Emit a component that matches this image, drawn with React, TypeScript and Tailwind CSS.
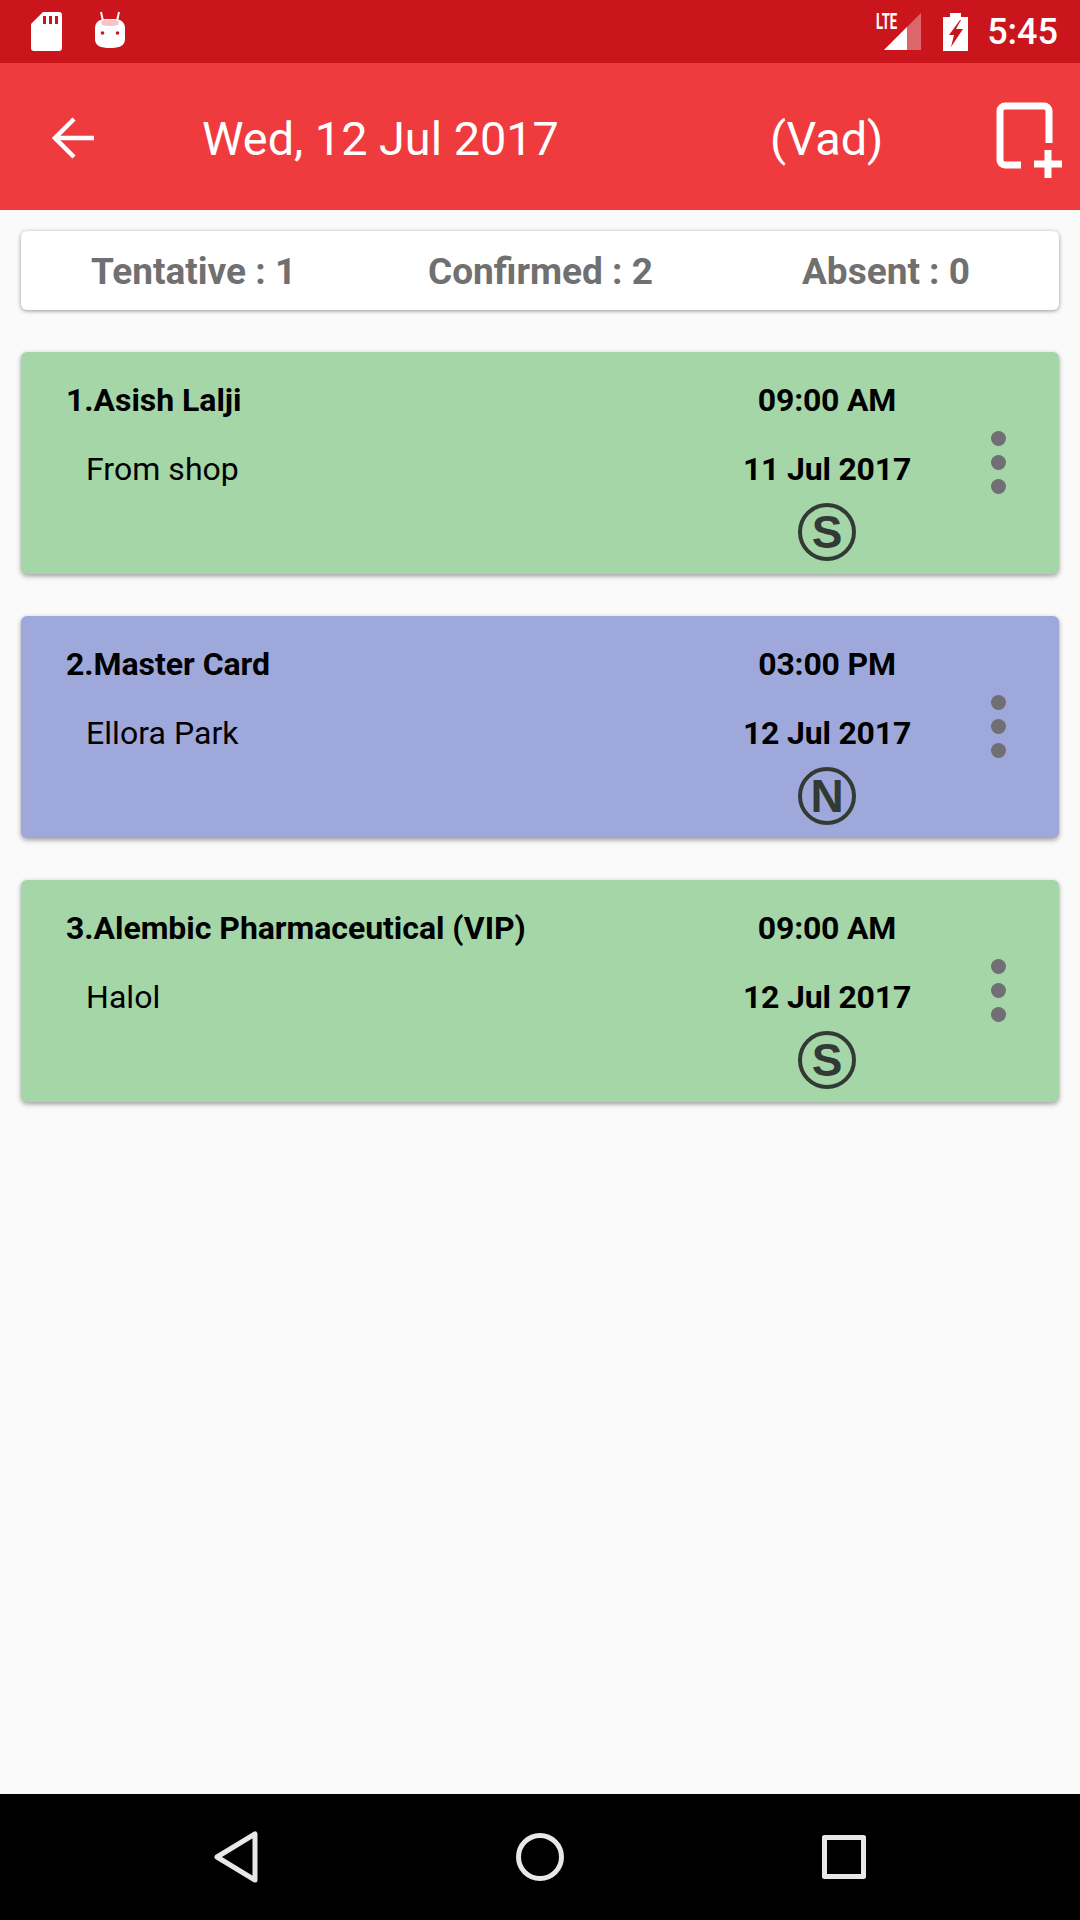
import React from "react";

const font = { fontFamily: "Roboto, sans-serif" };

function Badge({ letter }: { letter: string }) {
  return (
    <div className="w-[58px] h-[58px] rounded-full border-[4px] border-[#333a36] flex items-center justify-center text-[#333a36] font-bold text-[46px] leading-none" style={{ fontFamily: "'Liberation Sans', sans-serif" }}>
      {letter}
    </div>
  );
}

function Card({ title, place, time, date, letter, bg }: { title: string; place: string; time: string; date: string; letter: string; bg: string }) {
  return (
    <div className={`h-[222px] mx-[21px] mb-[42px] rounded-[6px] shadow-[0_2px_5px_rgba(0,0,0,0.38)] flex ${bg}`}>
      <div className="w-[691px] pl-[45px] pt-[30px] shrink-0">
        <div className="text-[32px] leading-[36px] font-bold text-black whitespace-nowrap tracking-[-0.04px]">{title}</div>
        <div className="text-[32px] leading-[36px] text-black pl-[20px] mt-[33px] tracking-[0.05px]">{place}</div>
      </div>
      <div className="w-[230px] shrink-0 pt-[30px] flex flex-col items-center">
        <div className="text-[32px] leading-[36px] font-bold text-black tracking-[-0.2px]">{time}</div>
        <div className="text-[32px] leading-[36px] font-bold text-black mt-[33px] tracking-[-0.2px]">{date}</div>
        <div className="mt-[16px]"><Badge letter={letter} /></div>
      </div>
      <div className="flex-1 pt-[79px] flex flex-col items-center gap-[9px] pr-[4px]">
        <div className="w-[15px] h-[15px] rounded-full bg-[#6f6f74]" />
        <div className="w-[15px] h-[15px] rounded-full bg-[#6f6f74]" />
        <div className="w-[15px] h-[15px] rounded-full bg-[#6f6f74]" />
      </div>
    </div>
  );
}

export default function App() {
  return (
    <div className="w-[1080px] h-[1920px] bg-[#fafafa] flex flex-col overflow-hidden" style={font}>
      <div className="h-[63px] bg-[#c9151b] flex items-center shrink-0 relative">
        <svg className="ml-[31px] shrink-0" width="31" height="39" viewBox="0 0 31 39">
          <path d="M12 0H28a3 3 0 0 1 3 3V36a3 3 0 0 1-3 3H3a3 3 0 0 1-3-3V12Z" fill="#fff" />
          <rect x="12" y="4" width="3" height="8" fill="#c9151b" />
          <rect x="18" y="4" width="3" height="8" fill="#c9151b" />
          <rect x="24" y="4" width="3" height="8" fill="#c9151b" />
        </svg>
        <svg className="ml-[33px] shrink-0 -mt-[4px]" width="30" height="38" viewBox="0 0 30 38">
          <path d="M6 1 8 10M24 1 22 10" stroke="#fff" strokeWidth="2" />
          <path d="M0 18C0 8 8 8 15 8S30 8 30 18V28C30 35 24 37 15 37S0 35 0 28Z" fill="#fff" />
          <path d="M6 10Q15 7 24 10L23 14Q15 16 7 14Z" fill="#f4c4c6" />
          <circle cx="7.5" cy="22" r="1.8" fill="#c9151b" />
          <circle cx="22.5" cy="22" r="1.8" fill="#c9151b" />
        </svg>
        <div className="ml-auto flex items-center h-full">
          <div className="relative w-[37px] h-[37px]">
            <svg className="block" width="37" height="37" viewBox="0 0 37 37">
              <path d="M37 0V37H0Z" fill="#fff" fillOpacity="0.35" />
              <path d="M23 14V37H0Z" fill="#fff" />
            </svg>
            <span className="absolute left-[-8px] top-[-3px] text-white font-bold text-[22px] leading-[24px] scale-x-[0.6] origin-left">LTE</span>
          </div>
          <svg className="ml-[22px] shrink-0" width="25" height="38" viewBox="0 0 25 38">
            <path d="M7 0H18V4H25V38H0V4H7Z" fill="#fff" />
            <path d="M17 7 6 22H11L8 34 20 16H13L18 7Z" fill="#c9151b" />
          </svg>
          <span className="ml-[19px] mr-[22px] text-white text-[36px] leading-none font-medium">5:45</span>
        </div>
      </div>

      <div className="h-[147px] bg-[#ef3b3e] flex items-center shrink-0 text-white">
        <svg className="ml-[52px] shrink-0 mt-[2px]" width="42" height="42" viewBox="0 0 42 42" fill="none" stroke="#fff" strokeWidth="4.5">
          <path d="M43 21H3" />
          <path d="M22 2 3 21 22 40" />
        </svg>
        <span className="ml-[108px] text-[46.8px] leading-none w-[568px] mt-[5px] whitespace-nowrap">Wed, 12 Jul 2017</span>
        <span className="text-[46.8px] leading-none w-[226px] mt-[5px]">(Vad)</span>
        <svg className="shrink-0 mt-[6px]" width="66" height="76" viewBox="0 0 66 76" fill="none" stroke="#fff" strokeWidth="7">
          <path d="M25 63H9a5 5 0 0 1-5-5V9a5 5 0 0 1 5-5H48a5 5 0 0 1 5 5V41" />
          <path d="M52 48V76M38 62H66" />
        </svg>
      </div>

      <div className="h-[79px] mx-[21px] mt-[21px] mb-[42px] pt-[1px] bg-white rounded-[6px] shadow-[0_1px_4px_rgba(0,0,0,0.4)] flex items-center shrink-0 text-[#707070] font-bold text-[37px] leading-none relative">
        <span className="ml-[70px] w-[337px]">Tentative : 1</span>
        <span className="w-[374px]">Confirmed : 2</span>
        <span>Absent : 0</span>
      </div>

      <Card title="1.Asish Lalji" place="From shop" time="09:00 AM" date="11 Jul 2017" letter="S" bg="bg-[#a5d6a7]" />
      <Card title="2.Master Card" place="Ellora Park" time="03:00 PM" date="12 Jul 2017" letter="N" bg="bg-[#9fa8da]" />
      <Card title="3.Alembic Pharmaceutical (VIP)" place="Halol" time="09:00 AM" date="12 Jul 2017" letter="S" bg="bg-[#a5d6a7]" />

      <div className="mt-auto h-[126px] bg-black flex items-center shrink-0 relative">
        <svg className="ml-[213px] shrink-0" width="48" height="52" viewBox="0 0 48 52" fill="none" stroke="#e8e8e8" strokeWidth="5" strokeLinejoin="round">
          <path d="M42 3V49L4 26Z" />
        </svg>
        <svg className="ml-[255px] shrink-0" width="48" height="48" viewBox="0 0 48 48" fill="none" stroke="#e8e8e8" strokeWidth="5">
          <circle cx="24" cy="24" r="21.5" />
        </svg>
        <svg className="ml-[258px] shrink-0" width="44" height="44" viewBox="0 0 44 44" fill="none" stroke="#e8e8e8" strokeWidth="5" strokeLinejoin="round">
          <rect x="2.5" y="2.5" width="39" height="39" />
        </svg>
      </div>
    </div>
  );
}
